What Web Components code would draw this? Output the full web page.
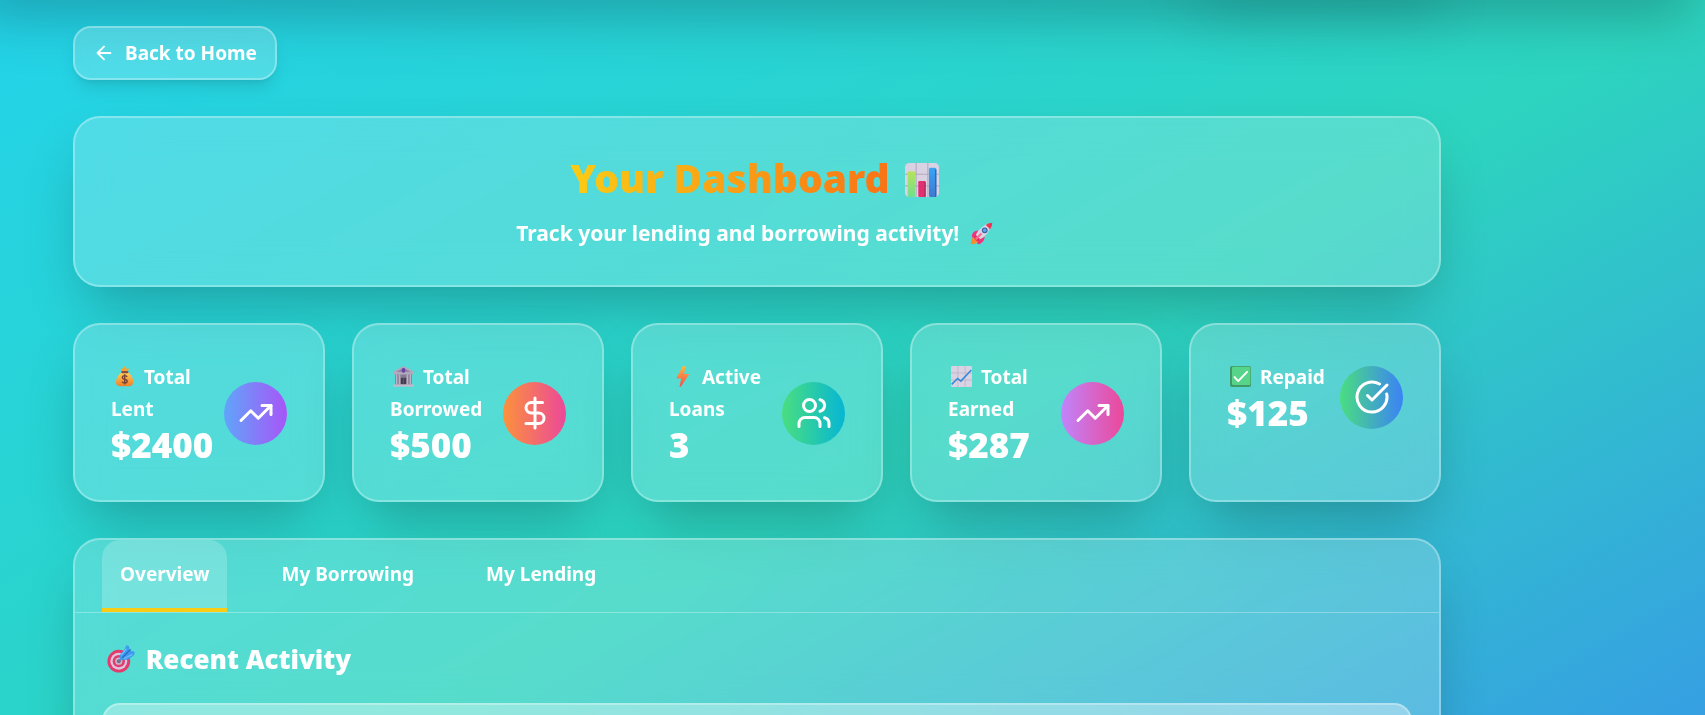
<!DOCTYPE html>
<html lang="en">
<head>
<meta charset="utf-8">
<meta name="viewport" content="width=device-width, initial-scale=1">
<title>Your Dashboard</title>
<style>
  html, body { margin: 0; height: 100%; }
  body { font-family: "Noto Sans", "Open Sans", sans-serif; color: #fff; }
</style>
</head>
<body>
<dash-page>
  <back-link href="#home">Back to Home</back-link>
  <hero-banner>
    <span slot="title">Your Dashboard</span>
    <emoji-art slot="title-art" name="chart" size="34" label="bar chart"></emoji-art>
    <span slot="subtitle">Track your lending and borrowing activity! <emoji-art name="rocket" size="23" label="rocket"></emoji-art></span>
  </hero-banner>
  <stat-grid>
    <stat-card icon="trend" from="#60a5fa" to="#a855f7"><span><emoji-art name="bag" size="21" label="money bag"></emoji-art> Total Lent</span><span slot="value">$2400</span></stat-card>
    <stat-card icon="dollar" from="#fb923c" to="#ec4899"><span><emoji-art name="bank" size="21" label="bank"></emoji-art> Total Borrowed</span><span slot="value">$500</span></stat-card>
    <stat-card icon="users" from="#4ade80" to="#06b6d4"><span><emoji-art name="bolt" size="21" label="lightning"></emoji-art> Active Loans</span><span slot="value">3</span></stat-card>
    <stat-card icon="trend" from="#c084fc" to="#ec4899"><span><emoji-art name="growth" size="21" label="rising chart"></emoji-art> Total Earned</span><span slot="value">$287</span></stat-card>
    <stat-card icon="check" from="#4ade80" to="#3b82f6"><span><emoji-art name="tick" size="21" label="check mark"></emoji-art> Repaid</span><span slot="value">$125</span></stat-card>
  </stat-grid>
  <tab-panel>
    <tab-button slot="tabs" active>Overview</tab-button>
    <tab-button slot="tabs">My Borrowing</tab-button>
    <tab-button slot="tabs">My Lending</tab-button>
    <section-title><emoji-art name="target" size="27" label="target"></emoji-art> Recent Activity</section-title>
    <activity-item></activity-item>
  </tab-panel>
</dash-page>

<script>
const define = (name, html, setup) => {
  const tpl = document.createElement('template');
  tpl.innerHTML = html;
  customElements.define(name, class extends HTMLElement {
    constructor() {
      super();
      this.attachShadow({ mode: 'open' }).append(tpl.content.cloneNode(true));
    }
    connectedCallback() { if (setup) setup(this, this.shadowRoot); }
  });
};

const EMOJI = {
  chart: `<defs><linearGradient id="g" x2="0" y2="1"><stop stop-color="#b6e35a"/><stop offset="1" stop-color="#6fe08f"/></linearGradient><linearGradient id="b" x2="0" y2="1"><stop stop-color="#36a6f5"/><stop offset="1" stop-color="#3f78cf"/></linearGradient></defs>
    <rect width="32" height="32" rx="4" fill="#d9d2e2"/><path d="M10.500 0v32M21.500 0v32M0 10.500h32M0 21.500h32" stroke="#b3a9c0" stroke-width="1"/>
    <rect x="2.500" y="8" width="7" height="24" rx="1" fill="url(#g)"/><rect x="12.500" y="17" width="7" height="15" rx="1" fill="#e22f70"/><rect x="22.500" y="4.500" width="7" height="27.500" rx="1.500" fill="url(#b)"/><path d="M18.800 18v14" stroke="#b92864" stroke-width="1.200"/><path d="M28.900 6v26" stroke="#3363b4" stroke-width="1.200"/>`,
  rocket: `<path d="M7 19 2 24l-1 7 7-1 5-5z" fill="#fb8a2e"/><path d="M5 14q5-4 10-1l-8 8-4 1q-1-5 2-8zM18 27q4-5 1-10l-8 8-1 6q5 0 8-4z" fill="#f0337e"/>
    <path d="M8 18Q14 5 30 1q-3 17-16 23z" fill="#d9d5e4"/><path d="M22 4q4-3 9-3 0 5-3 9z" fill="#f03554"/><path d="M8 18l6 6-4 3-5-5z" fill="#e4325f"/><path d="M8 24l8-8" stroke="#f96a94" stroke-width="3"/>
    <circle cx="20.500" cy="11.500" r="4" fill="#3c5f9f"/><circle cx="20.500" cy="11.500" r="2.500" fill="#55a9ef"/>`,
  bag: `<defs><linearGradient id="m" x2="0" y2="1"><stop stop-color="#ffd05a"/><stop offset="1" stop-color="#ef7f2b"/></linearGradient></defs>
    <path d="M10 5l2-2 2 1 2-4 3 4 2-1 2 2-4 4h-6z" fill="#f4a233"/><path d="M12 9h9q10 8 8 17-1 5-7 5H10q-6 0-7-5Q2 17 12 9z" fill="url(#m)"/><rect x="11" y="7.500" width="11" height="3.500" rx="1.500" fill="#8a4e43"/>
    <path d="M20 16.500q-1.500-2-4-1.800-3.500.3-3.200 3 .2 2 3.500 2.600 3.800.7 3.800 3 0 2.400-3.600 2.500-3 0-4.200-2M16.300 12.500v15.500" fill="none" stroke="#7a4536" stroke-width="2.200"/>`,
  bank: `<path d="M3 11h26v18H3z" fill="#857c93"/><path d="M16 0 31 8v5H1V8z" fill="#b1a9be"/><path d="M16 2.500 27 9H5z" fill="#8f869d"/><ellipse cx="16" cy="6.500" rx="2.600" ry="4" fill="#6941a8"/><path d="M5.500 13v15M10 13v15M22 13v15M26.500 13v15" stroke="#bab2c6" stroke-width="2.400"/><path d="M12 18h8v10h-8z" fill="#443d50"/><path d="M16 18v10" stroke="#6b6378"/><path d="M0 28h32v3.500H0z" fill="#c2bacb"/>`,
  bolt: `<defs><linearGradient id="z" x2="0" y2="1"><stop stop-color="#ffba3d"/><stop offset="1" stop-color="#f8484d"/></linearGradient></defs><path d="M16.500 0h4l-2 12h7q1 0 .3 1L14 31l-2.500 1 2.500-13H7.500q-1-.2-.4-1.200z" fill="url(#z)"/>`,
  growth: `<rect width="32" height="32" rx="2" fill="#d9d2e2"/><path d="M10.500 0v32M21.500 0v32M0 10.500h32M0 21.500h32" stroke="#b8aec5" stroke-width="1"/><path d="m1 28 9-9 5 4L31 6" fill="none" stroke="#3489d8" stroke-width="2.400"/>`,
  tick: `<rect width="32" height="32" rx="3" fill="#3f9a66"/><rect x="3" y="1" width="28" height="28" rx="2" fill="#56d58a"/><path d="m7 17 5.500 6L26 9" fill="none" stroke="#fff" stroke-width="3" stroke-linecap="round" stroke-linejoin="round"/>`,
  target: `<circle cx="14" cy="18" r="13.500" fill="#e33b6c"/><circle cx="14" cy="18" r="10" fill="#dcc5dc"/><circle cx="14" cy="18" r="7.300" fill="#e33b6c"/><circle cx="14" cy="18" r="4.300" fill="#c9b3cc"/><circle cx="14" cy="18" r="2.300" fill="#7a6b86"/>
    <path d="m14 18 6-6" stroke="#5c82a8" stroke-width="2"/><path d="M15 11 20 5l3-6 3 1 1 5 6 2-1 4-7 5-9 1z" fill="#3f9bef"/><path d="m18 14 10-10" stroke="#2568c5" stroke-width="1.500"/><path d="m20 15 10-5M17 11l6-8" stroke="#7cc4ff" stroke-width="1.200"/>`
};

define('emoji-art', `<style>
  :host { display: inline-block; line-height: 0; vertical-align: -4px; margin: 0 5px; }
  :host([size="21"]) { margin: 0 4px 0 3px; vertical-align: -3px; }
  svg { display: block; overflow: visible; }
</style><svg viewBox="0 0 32 32" role="img"></svg>`, (el, root) => {
  const svg = root.querySelector('svg'), size = el.getAttribute('size');
  svg.setAttribute('width', size);
  svg.setAttribute('height', size);
  svg.setAttribute('aria-label', el.getAttribute('label'));
  svg.innerHTML = EMOJI[el.getAttribute('name')];
});

define('dash-page', `<style>
  :host { display: block; position: relative; height: 100vh; box-sizing: border-box; overflow: hidden auto; scrollbar-width: none;
    background: #3b82f6 linear-gradient(to bottom right, #22d3ee -6%, #2dd4bf 50%, #3b82f6 108%) 0 0 / 100% 960px no-repeat; }
  .nav, .menu { position: absolute; bottom: 100%; height: 90px; box-shadow: 0 28px 56px -13px rgba(0,0,0,.25); }
  .nav { left: -40px; right: 0; }
  .menu { right: 252px; width: 270px; opacity: .5; }
  main { display: flex; flex-direction: column; align-items: stretch; gap: 36px; max-width: 1368px; padding: 26px 73px 36px; }
</style><div class="nav"></div><div class="menu"></div><main><slot></slot></main>`);

define('back-link', `<style>
  :host { display: block; align-self: flex-start; }
  a { display: flex; align-items: center; gap: 10px; box-sizing: border-box; height: 54px; padding: 0 18px; border: 2px solid rgba(255,255,255,.3); border-radius: 18px;
    background: rgba(255,255,255,.2); backdrop-filter: blur(9px); box-shadow: 0 11px 17px -3px rgba(0,0,0,.1), 0 5px 7px -4px rgba(0,0,0,.1);
    color: #fff; font-size: 19px; font-weight: 700; line-height: 31px; text-decoration: none; }
</style><a><svg width="22" height="22" viewBox="0 0 24 24" fill="none" stroke="currentColor" stroke-width="2" stroke-linecap="round" stroke-linejoin="round" aria-hidden="true"><path d="m12 19-7-7 7-7M19 12H5"/></svg><slot></slot></a>`,
  (el, root) => { root.querySelector('a').href = el.getAttribute('href'); });

define('hero-banner', `<style>
  :host { display: block; padding: 36px; border: 2px solid rgba(255,255,255,.3); border-radius: 27px; background: rgba(255,255,255,.2);
    backdrop-filter: blur(18px); box-shadow: 0 28px 56px -13px rgba(0,0,0,.25); text-align: center; }
  h1 { margin: 0 0 15px; font-size: 39px; line-height: 48px; font-weight: 900; }
  .ink { background: linear-gradient(to right, #facc15, #f97316); -webkit-background-clip: text; background-clip: text; color: transparent; }
  p { margin: 0; font-size: 21px; line-height: 32px; font-weight: 700; }
</style><h1><span class="ink"><slot name="title"></slot></span> <slot name="title-art"></slot></h1><p><slot name="subtitle"></slot></p>`);

define('stat-grid', `<style>
  :host { display: grid; grid-template-columns: repeat(5, minmax(0, 1fr)); gap: 27px; }
</style><slot></slot>`);

const ICONS = {
  trend: '<path d="m22 7-8.500 8.500-5-5L2 17"/><path d="M16 7h6v6"/>',
  dollar: '<path d="M12 2v20M17 5H9.500a3.500 3.500 0 0 0 0 7h5a3.500 3.500 0 0 1 0 7H6"/>',
  users: '<path d="M16 21v-2a4 4 0 0 0-4-4H6a4 4 0 0 0-4 4v2"/><circle cx="9" cy="7" r="4"/><path d="M22 21v-2a4 4 0 0 0-3-3.870M16 3.130a4 4 0 0 1 0 7.750"/>',
  check: '<path d="M21.801 10A10 10 0 1 1 17 3.335"/><path d="m9 11 3 3L22 4"/>'
};

define('stat-card', `<style>
  :host { display: block; padding: 36px 36px 35px; border: 2px solid rgba(255,255,255,.3); border-radius: 27px; background: rgba(255,255,255,.2);
    backdrop-filter: blur(18px); box-shadow: 0 28px 56px -13px rgba(0,0,0,.25); }
  .row { display: flex; align-items: center; justify-content: space-between; }
  .text { min-width: 0; font-weight: 700; font-size: 19px; line-height: 32px; }
  .label, .value { margin: 0; }
  .value { font-size: 35px; line-height: 40px; font-weight: 900; }
  .badge { flex: none; display: grid; place-items: center; width: 63px; height: 63px; border-radius: 50%; }
</style><div class="row"><div class="text"><p class="label"><slot></slot></p><p class="value"><slot name="value"></slot></p></div>
<div class="badge"><svg width="36" height="36" viewBox="0 0 24 24" fill="none" stroke="#fff" stroke-width="2" stroke-linecap="round" stroke-linejoin="round" aria-hidden="true"></svg></div></div>`,
  (el, root) => {
    root.querySelector('.badge').style.background = `linear-gradient(to right, ${el.getAttribute('from')}, ${el.getAttribute('to')})`;
    root.querySelector('svg').innerHTML = ICONS[el.getAttribute('icon')];
  });

define('tab-panel', `<style>
  :host { display: block; border: 2px solid rgba(255,255,255,.3); border-radius: 27px; background: rgba(255,255,255,.2);
    backdrop-filter: blur(18px); box-shadow: 0 28px 56px -13px rgba(0,0,0,.25); }
  nav { display: flex; gap: 36px; padding: 0 27px; border-bottom: 1px solid rgba(255,255,255,.3); }
  .body { display: flex; flex-direction: column; gap: 25px; padding: 27px; }
</style><nav role="tablist"><slot name="tabs"></slot></nav><div class="body"><slot></slot></div>`);

define('tab-button', `<style>
  :host { display: block; }
  button { display: block; height: 72px; margin: 0; padding: 0 18px; border: 0; border-bottom: 4px solid transparent; background: none; color: #fff; font: inherit; font-size: 19px; line-height: 32px; font-weight: 700; cursor: pointer; }
  :host([active]) button { border-bottom-color: #facc15; border-radius: 18px 18px 0 0; background: rgba(255,255,255,.2); }
</style><button type="button" role="tab"><slot></slot></button>`,
  (el, root) => root.querySelector('button').setAttribute('aria-selected', el.hasAttribute('active')));

define('section-title', `<style>
  :host { display: block; }
  h2 { margin: 0; font-size: 26px; line-height: 38px; font-weight: 900; }
</style><h2><slot></slot></h2>`);

define('activity-item', `<style>
  :host { display: block; min-height: 90px; box-sizing: border-box; border: 2px solid rgba(255,255,255,.3); border-radius: 18px; background: rgba(255,255,255,.35); }
</style><slot></slot>`);
</script>
</body>
</html>
